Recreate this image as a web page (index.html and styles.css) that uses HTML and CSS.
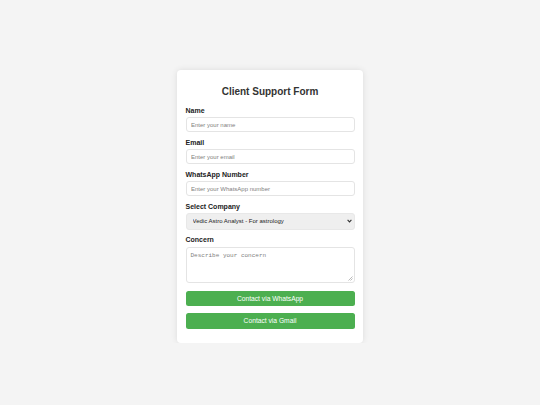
FILE: index.html
```html
<!DOCTYPE html>
<html lang="en">
<head>
<meta charset="utf-8">
<title>Client Support Form</title>
<link rel="stylesheet" href="styles.css">
</head>
<body>
<div class="page">
  <form class="card">
    <h2 class="title">Client Support Form</h2>
    <label class="label" for="name">Name</label>
    <input class="field" id="name" type="text" placeholder="Enter your name">
    <label class="label" for="email">Email</label>
    <input class="field" id="email" type="email" placeholder="Enter your email">
    <label class="label" for="wa">WhatsApp Number</label>
    <input class="field" id="wa" type="text" placeholder="Enter your WhatsApp number">
    <label class="label" for="company">Select Company</label>
    <div class="select-wrap">
      <select class="field select" id="company">
        <option>Vedic Astro Analyst - For astrology</option>
      </select>
      <svg class="chevron" width="5" height="4" viewBox="0 0 5 4" aria-hidden="true">
        <path d="M0.6 0.9 L2.5 2.9 L4.4 0.9" fill="none" stroke="#333" stroke-width="1.1"/>
      </svg>
    </div>
    <label class="label" for="concern">Concern</label>
    <div class="area-wrap">
      <textarea class="field area" id="concern" placeholder="Describe your concern"></textarea>
      <svg class="grip" width="5" height="5" viewBox="0 0 5 5" aria-hidden="true">
        <path d="M0.5 4.5 L4.5 0.5 M2.5 4.5 L4.5 2.5" fill="none" stroke="#aaa" stroke-width="0.8"/>
      </svg>
    </div>
    <button class="btn btn-first" type="button">Contact via WhatsApp</button>
    <button class="btn" type="button">Contact via Gmail</button>
  </form>
</div>
</body>
</html>
```
FILE: styles.css
```css
* { box-sizing: border-box; }
html, body { margin: 0; padding: 0; }
body {
  background: #f4f4f4;
  font-family: "Liberation Sans", Arial, sans-serif;
  color: #333;
}
.page {
  display: flex;
  justify-content: center;
  padding-top: 70px;
}
.card {
  width: 186px;
  background: #fff;
  border-radius: 4px;
  box-shadow: 0 0 6px rgba(0, 0, 0, 0.1);
  padding: 16px 8.5px 14.4px;
  display: flex;
  flex-direction: column;
}
.title {
  margin: 0 0 8.7px;
  font-size: 10px;
  line-height: 12px;
  font-weight: bold;
  text-align: center;
  color: #333;
}
.label {
  display: block;
  font-size: 7px;
  line-height: 8px;
  font-weight: bold;
  color: #222;
  margin-bottom: 2.6px;
}
.field {
  display: block;
  width: 100%;
  height: 15px;
  margin: 0 0 6.4px;
  padding: 0 4.5px;
  border: 1px solid #e4e4e4;
  border-radius: 3px;
  font-family: "Liberation Sans", Arial, sans-serif;
  font-size: 6px;
  color: #222;
  background: #fff;
  outline: none;
}
.field::placeholder { color: #808080; }
.select-wrap,
.area-wrap {
  position: relative;
}
.select {
  -webkit-appearance: none;
  appearance: none;
  height: 16.3px;
  background: #efefef;
  border-color: #e8e8e8;
  color: #222;
  padding: 0 6px;
}
.chevron {
  position: absolute;
  right: 3px;
  top: 6px;
  pointer-events: none;
}
.area {
  height: 36px;
  padding: 4px;
  font-family: "Liberation Mono", "Courier New", monospace;
  resize: none;
  margin-bottom: 8px;
}
.grip {
  position: absolute;
  right: 1.5px;
  bottom: 9.5px;
  pointer-events: none;
}
.btn {
  display: block;
  width: 100%;
  height: 15.7px;
  border: none;
  border-radius: 2.5px;
  background: #4caf50;
  color: #fff;
  font-family: "Liberation Sans", Arial, sans-serif;
  font-size: 6.7px;
  padding: 0;
  cursor: pointer;
}
.btn-first { margin-bottom: 6.7px; }
```
